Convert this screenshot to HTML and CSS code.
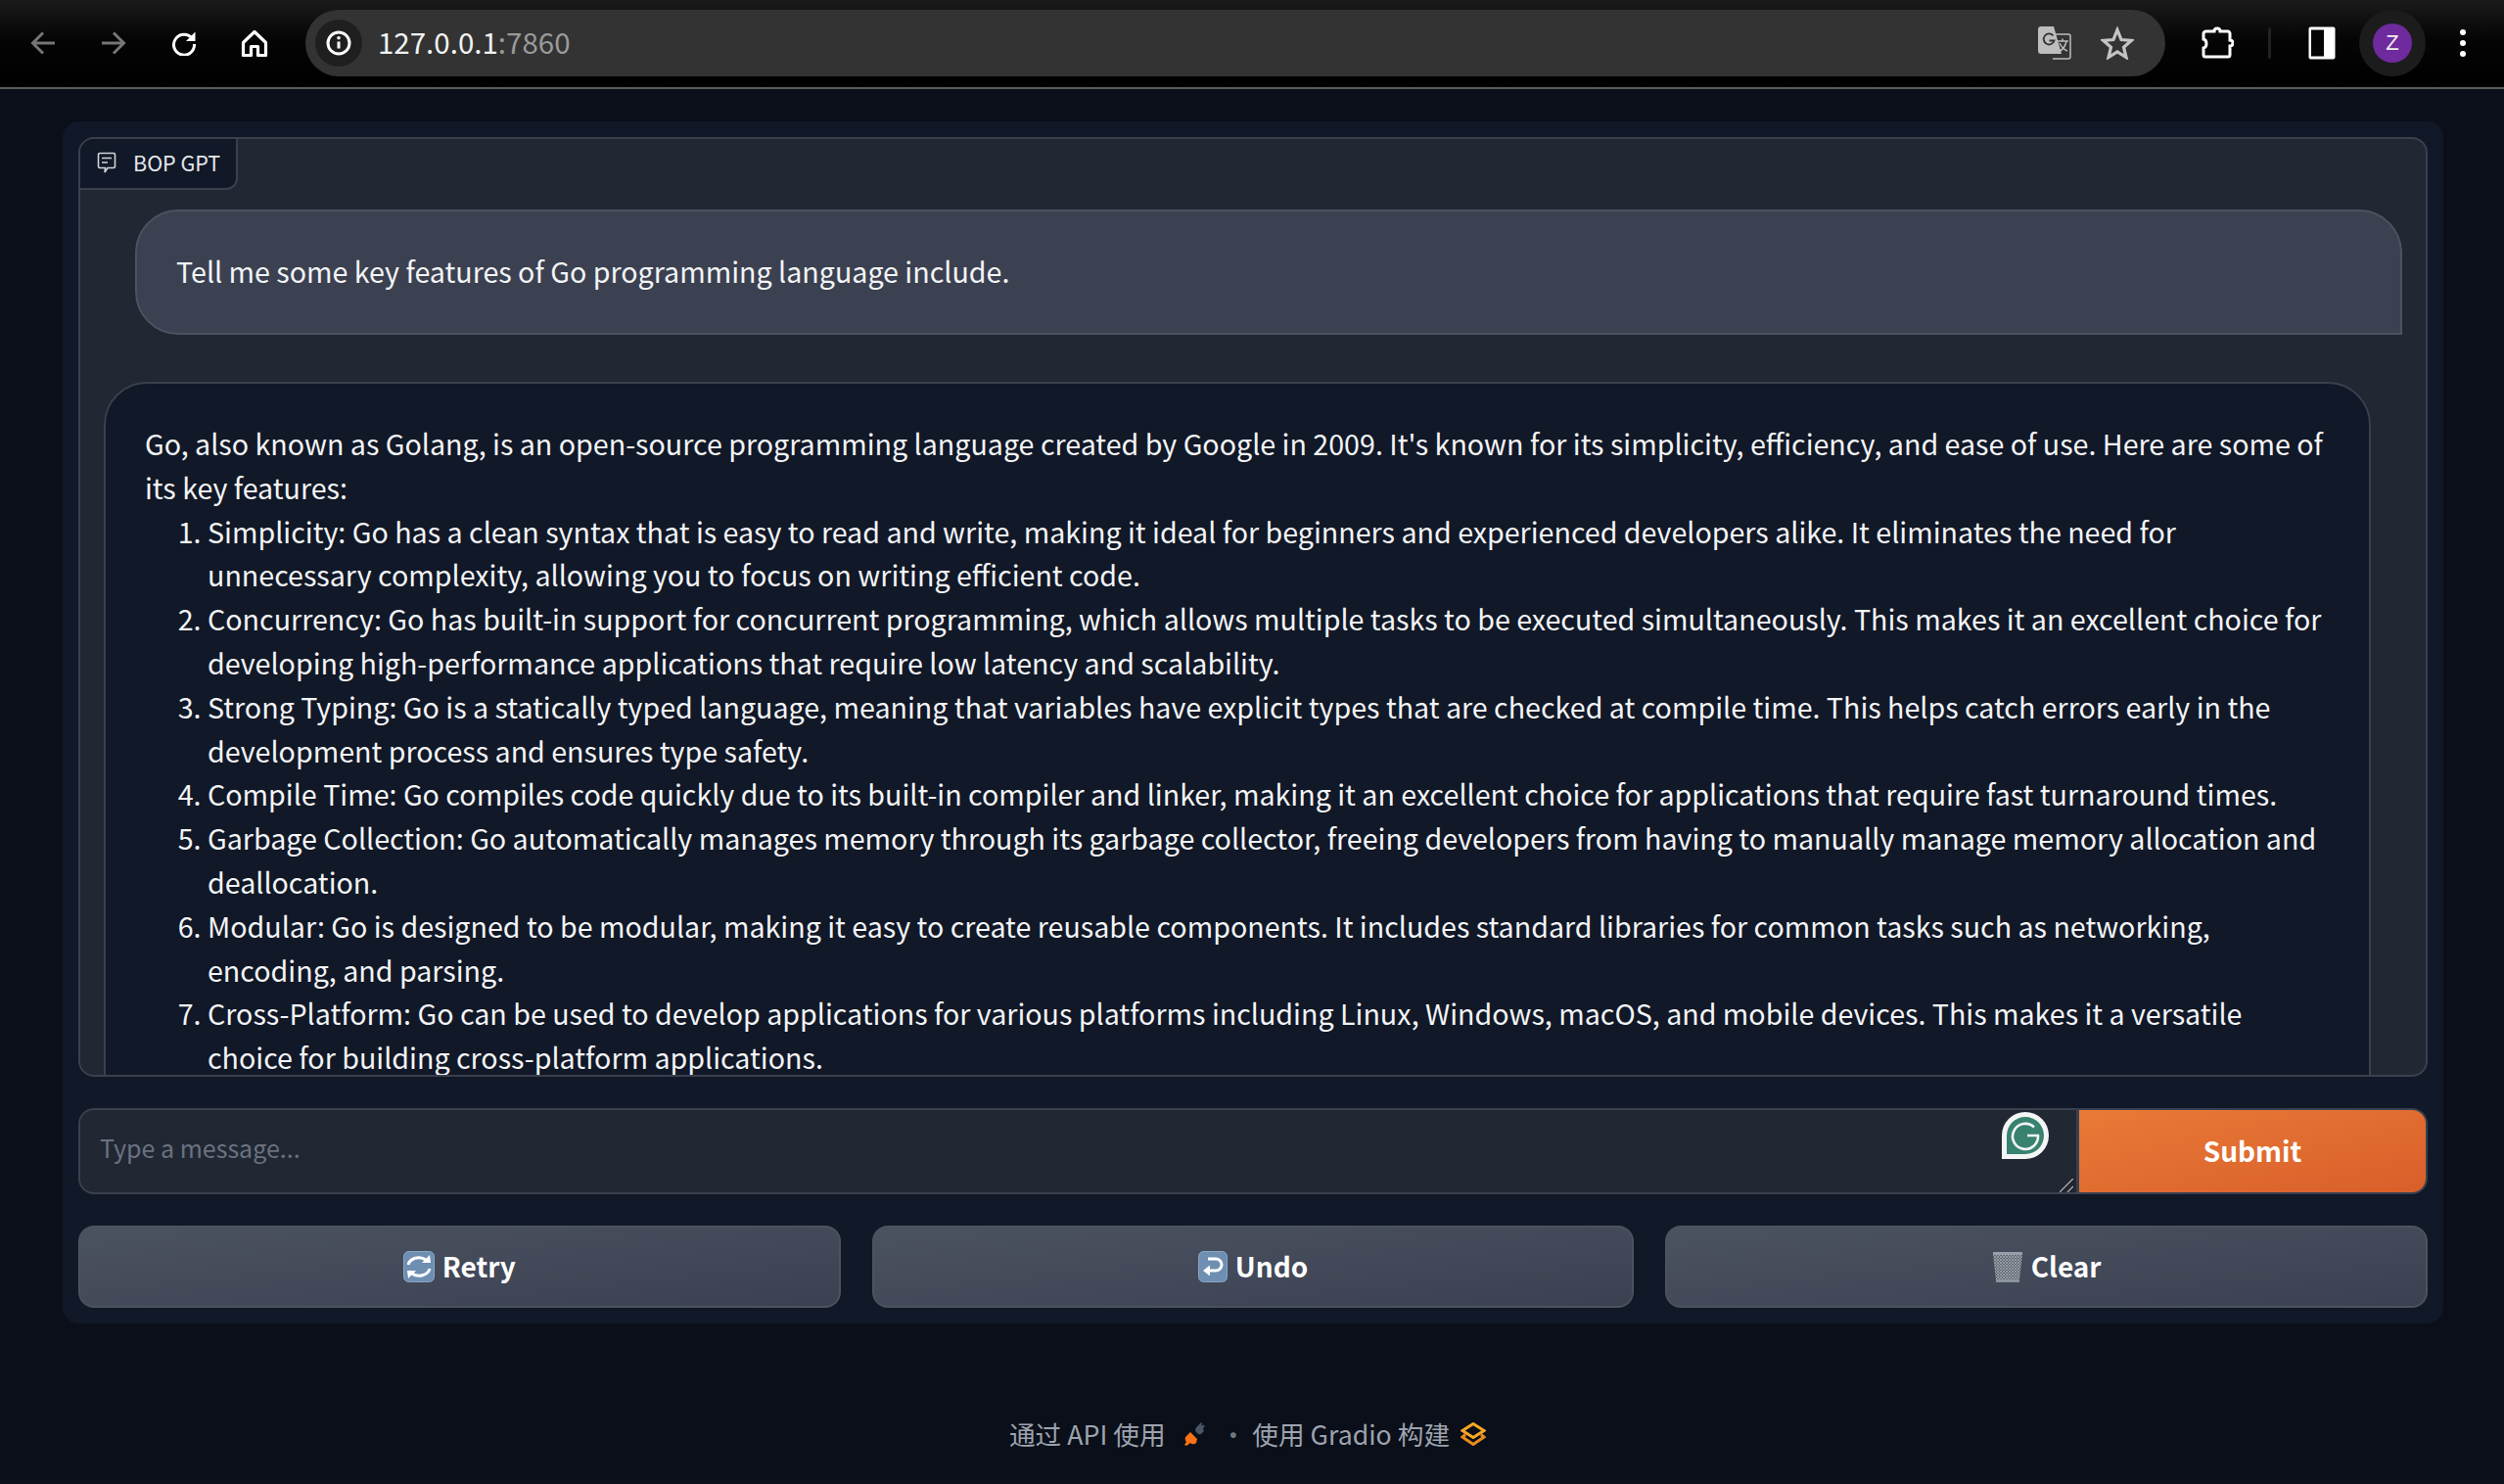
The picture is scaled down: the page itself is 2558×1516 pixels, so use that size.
FILE: index.html
```html
<!DOCTYPE html>
<html lang="en">
<head>
<meta charset="utf-8">
<title>BOP GPT</title>
<link rel="stylesheet" href="styles.css">
</head>
<body>
<header class="toolbar">
  <div class="tool dim"><svg viewBox="0 0 26 26" width="26" height="26"><path d="M25 13H3M13 2.500 2.500 13 13 23.500" class="st2"/></svg></div>
  <div class="tool dim"><svg viewBox="0 0 26 26" width="26" height="26"><path d="M1 13h22M13 2.500 23.500 13 13 23.500" class="st2"/></svg></div>
  <div class="tool"><svg viewBox="0 0 26 26" width="26" height="26"><path d="M21.500 8.500A10.500 10.500 0 1 0 23.500 14" class="st3"/><path d="M24.500 1.500v9.500h-9.500z" class="fillw"/></svg></div>
  <div class="tool"><svg viewBox="0 0 28 28" width="28" height="28"><path d="M14 2.500 2.500 13.500v13h8v-9h7v9h8v-13z" class="st3b"/></svg></div>
  <div class="address">
    <span class="info"><svg viewBox="0 0 26 26" width="26" height="26"><circle cx="13" cy="13" r="11" class="st3"/><path d="M13 11.500v7" class="st3"/><circle cx="13" cy="7.800" r="1.800" class="fillw"/></svg></span>
    <span class="url">127.0.0.1<span class="port">:7860</span></span>
    <span class="addr-space"></span>
    <svg class="translate" viewBox="0 0 34 34" width="34" height="34"><path d="M15 33h16a2 2 0 0 0 2-2V10a2 2 0 0 0-2-2H14" fill="none" stroke="#bdbdbd" stroke-width="1.500"/><path d="M3 0h13l8 28H3a3 3 0 0 1-3-3V3a3 3 0 0 1 3-3z" fill="#bdbdbd"/><path d="M15.500 9.500a5.500 5.500 0 1 0 1 5h-5" fill="none" stroke="#333" stroke-width="1.800"/><path d="M20 15h11M25 12.500v2.500M29 15c-1 5-4 9-8 11M22 17c2 4 5 7 8 8" fill="none" stroke="#bdbdbd" stroke-width="1.500"/></svg>
    <svg class="star" viewBox="0 0 34 34" width="34" height="34"><path d="m17 3.500 4 10 10.500.8-8 6.900 2.500 10.300-9-5.600-9 5.600 2.500-10.300-8-6.900 10.500-.8z" fill="none" stroke="#c4c4c4" stroke-width="3.200"/></svg>
  </div>
  <div class="tool first-right"><svg viewBox="0 0 34 34" width="34" height="34"><path d="M6 5h8c0-4 6-4 6 0h8a3 3 0 0 1 2 2v7c4 0 4 6 0 6v9a2 2 0 0 1-2 2H5a2 2 0 0 1-2-2v-7c4-1 4-8 0-9V7a3 3 0 0 1 3-2z" fill="none" stroke="#fff" stroke-width="3"/></svg></div>
  <div class="divider"><span></span></div>
  <div class="tool"><svg viewBox="0 0 30 36" width="30" height="36"><rect x="1.500" y="1.500" width="27" height="33" rx="2" fill="#fff"/><rect x="4" y="4.500" width="13" height="27" fill="#050505"/></svg></div>
  <div class="tool"><span class="avatar-ring"><span class="avatar">Z</span></span></div>
  <div class="tool"><span class="dots"><i></i><i></i><i></i></span></div>
</header>

<main class="app">
  <section class="chatbot">
    <div class="label">
      <svg viewBox="0 0 20 22" width="20" height="22"><path d="M3 1.500h14a1.500 1.500 0 0 1 1.500 1.500v12a1.500 1.500 0 0 1-1.500 1.500h-6L8 21l.5-4.500H3A1.500 1.500 0 0 1 1.500 15V3A1.500 1.500 0 0 1 3 1.500zM5 6.500h10M5 11h6" fill="none" stroke="#d1d5db" stroke-width="1.600"/></svg>
      <span>BOP GPT</span>
    </div>
    <div class="messages">
      <div class="bubble user">Tell me some key features of Go programming language include.</div>
      <div class="bubble bot">
        <p>Go, also known as Golang, is an open-source programming language created by Google in 2009. It's known for its simplicity, efficiency, and ease of use. Here are some of its key features:</p>
        <ol>
          <li>Simplicity: Go has a clean syntax that is easy to read and write, making it ideal for beginners and experienced developers alike. It eliminates the need for unnecessary complexity, allowing you to focus on writing efficient code.</li>
          <li>Concurrency: Go has built-in support for concurrent programming, which allows multiple tasks to be executed simultaneously. This makes it an excellent choice for developing high-performance applications that require low latency and scalability.</li>
          <li>Strong Typing: Go is a statically typed language, meaning that variables have explicit types that are checked at compile time. This helps catch errors early in the development process and ensures type safety.</li>
          <li>Compile Time: Go compiles code quickly due to its built-in compiler and linker, making it an excellent choice for applications that require fast turnaround times.</li>
          <li>Garbage Collection: Go automatically manages memory through its garbage collector, freeing developers from having to manually manage memory allocation and deallocation.</li>
          <li>Modular: Go is designed to be modular, making it easy to create reusable components. It includes standard libraries for common tasks such as networking, encoding, and parsing.</li>
          <li>Cross-Platform: Go can be used to develop applications for various platforms including Linux, Windows, macOS, and mobile devices. This makes it a versatile choice for building cross-platform applications.</li>
        </ol>
      </div>
    </div>
  </section>

  <form class="composer">
    <div class="input-wrap">
      <textarea class="message" placeholder="Type a message..."></textarea>
      <svg class="grammarly" viewBox="0 0 48 48" width="48" height="48"><path d="M24 0a24 24 0 0 1 0 48H0V24A24 24 0 0 1 24 0z" fill="#f4f6f6"/><path d="M24 5a19 19 0 0 1 0 38H5V24A19 19 0 0 1 24 5z" fill="#388270"/><path d="M33 15.500A13 13 0 1 0 37 24H26" fill="none" stroke="#f4f6f6" stroke-width="2.600"/></svg>
      <svg class="grip" viewBox="0 0 14 14" width="14" height="14"><path d="M0 14 14 0M8 14l6-6" fill="none" stroke="#a3a3a3" stroke-width="1.500"/><path d="M2 14 14 2M10 14l4-4" fill="none" stroke="#111" stroke-width="1"/></svg>
    </div>
    <button type="button" class="submit">Submit</button>
  </form>

  <div class="actions">
    <button type="button" class="action">
      <svg viewBox="0 0 32 32" width="32" height="32"><rect x=".5" y=".5" width="31" height="31" rx="5" class="emoji-blue"/><path d="M5 14a11 9 0 0 1 18-5" fill="none" stroke="#fff" stroke-width="3"/><path d="M19 12h9l-1-8z" fill="#fff"/><path d="M27 18a11 9 0 0 1-18 5" fill="none" stroke="#fff" stroke-width="3"/><path d="M13 20H4l1 8z" fill="#fff"/></svg>
      <span>Retry</span>
    </button>
    <button type="button" class="action">
      <svg viewBox="0 0 30 32" width="30" height="32"><rect x=".5" y=".5" width="29" height="31" rx="5" class="emoji-blue"/><path d="M10 8h8a6 6 0 0 1 0 12h-8" fill="none" stroke="#fff" stroke-width="3"/><path d="M12 14.500 5 20l7 5.500z" fill="#fff"/></svg>
      <span>Undo</span>
    </button>
    <button type="button" class="action">
      <svg viewBox="0 0 32 32" width="32" height="32">
        <defs><pattern id="mesh" width="3" height="3" patternUnits="userSpaceOnUse"><rect width="3" height="3" fill="#5f6772"/><path d="M0 0l3 3M3 0L0 3" stroke="#aab0b7" stroke-width=".7"/></pattern></defs>
        <path d="M1 3h30l-3 27a2 2 0 0 1-2 2H6a2 2 0 0 1-2-2z" fill="url(#mesh)"/><path d="M1 2.500h30" stroke="#97a0aa" stroke-width="3"/><path d="M4 30.500h24" stroke="#8d97a2" stroke-width="2.500"/>
      </svg>
      <span>Clear</span>
    </button>
  </div>
</main>

<footer class="foot">
  <span>通过 API 使用</span>
  <svg class="plug" viewBox="0 0 24 24" width="24" height="24"><path d="M12 6l6-6 1 1-1 3 3-1 1 1-2 3 1 3-3 3a4 4 0 0 1-5-1l-1-1a5 5 0 0 1 0-5z" fill="#4b5563" transform="translate(2 0) scale(.9)"/><path d="M3 15l5-5 7 7-1 4a4 4 0 0 1-6 0l-4 3-2-1 2-3a5 5 0 0 1-1-5z" fill="#f97316" transform="translate(-1 0)"/></svg>
  <span class="sep">·</span>
  <span>使用 Gradio 构建</span>
  <svg class="gradio" viewBox="0 0 26 24" width="26" height="24"><path d="M13 1.500 24 8.500 13 15.500 2 8.500z" fill="none" stroke="#f9a825" stroke-width="3"/><path d="M5 12.500 2 15 13 22.500 24 15l-3-2.500" fill="none" stroke="#ea8a1e" stroke-width="3"/></svg>
</footer>
</body>
</html>
```
FILE: styles.css
```css
* { box-sizing: border-box; }
html, body { margin: 0; height: 100%; }
body {
  background: #0b0f19;
  color: #f3f4f6;
  font-family: "Noto Sans CJK SC", "Noto Sans", sans-serif;
  font-size: 28.640px;
  line-height: 44.8px;
  overflow: hidden;
}
.toolbar {
  height: 91px;
  display: flex;
  align-items: center;
  padding: 0 6px 2px 8px;
  background: linear-gradient(#1b1b1b 0, #050505 45%, #000 100%);
  border-bottom: 2px solid #5c5c5c;
}
.tool { width: 72px; height: 68px; flex: none; display: flex; align-items: center; justify-content: center; }
.tool.dim { opacity: .45; }
.st2 { fill: none; stroke: #fff; stroke-width: 3; }
.st3 { fill: none; stroke: #fff; stroke-width: 3; }
.st3b { fill: none; stroke: #fff; stroke-width: 3.200; stroke-linejoin: round; }
.fillw { fill: #fff; }
.address {
  flex: 1;
  height: 68px;
  margin: 0 17px 0 16px;
  padding: 0 32px 0 10px;
  border-radius: 34px;
  background: #333333;
  display: flex;
  align-items: center;
}
.info { width: 48px; height: 48px; border-radius: 50%; background: #1f1f1f; display: flex; align-items: center; justify-content: center; }
.url { margin: -3px 0 0 16px; font-size: 29.500px; line-height: 40px; color: #f2f2f2; font-family: "Noto Sans CJK SC", sans-serif; }
.port { color: #9a9a9a; }
.addr-space { flex: 1; }
.translate { margin-right: 30px; }
.divider { width: 35px; height: 32px; display: flex; justify-content: center; }
.divider span { width: 3px; background: #222; border-radius: 2px; }
.avatar-ring { width: 68px; height: 68px; border-radius: 50%; background: #1c1c1c; display: flex; align-items: center; justify-content: center; }
.avatar { width: 40px; height: 40px; border-radius: 50%; background: #6f2a9e; color: #eee; font-size: 22px; line-height: 40px; text-align: center; font-family: "Liberation Sans", sans-serif; }
.dots { display: flex; flex-direction: column; gap: 5px; }
.dots i { display: block; width: 6px; height: 6px; border-radius: 50%; background: #fff; }

.app {
  width: 2432px;
  height: 1228px;
  margin: 33px 0 0 64px;
  padding: 16px;
  border-radius: 16px;
  background: #111827;
  display: flex;
  flex-direction: column;
  gap: 32px;
}
.chatbot {
  position: relative;
  height: 960px;
  flex: none;
  background: #212733;
  border: 2px solid #3a404e;
  border-radius: 16px;
  overflow: hidden;
}
.label {
  position: absolute;
  top: 0;
  left: 0;
  height: 52px;
  padding: 0 16px 2px 17px;
  display: flex;
  align-items: center;
  gap: 17px;
  background: #111827;
  border-right: 2px solid #3a404e;
  border-bottom: 2px solid #3a404e;
  border-radius: 0 0 12px 0;
  font-size: 21.500px;
  line-height: 30px;
  color: #e5e7eb;
}
.messages { display: flex; flex-direction: column; gap: 48px; padding: 72px 24px 0; }
.bubble { padding: 39px 40px 40px; }
.user {
  margin-left: 32px;
  background: #3b4151;
  border: 2px solid #4b5260;
  border-radius: 44px 44px 0 44px;
  height: 128px;
}
.bot {
  margin-right: 32px;
  background: #111827;
  border: 2px solid #3a404e;
  border-radius: 44px 44px 44px 0;
  padding-right: 46px;
}
.bot p { margin: 0; }
.bot ol { margin: 0; padding-left: 64px; }

.composer { display: flex; height: 88px; flex: none; }
.input-wrap { position: relative; flex: 1; }
.message {
  display: block;
  width: 100%;
  height: 100%;
  resize: none;
  padding: 19px 20px;
  background: #212733;
  border: 2px solid #3a404e;
  border-right: 0;
  border-radius: 16px 0 0 16px;
  color: #f3f4f6;
  font: 25px/38px "Noto Sans CJK SC", sans-serif;
  outline: none;
}
.message::placeholder { color: #6b7280; }
.grammarly { position: absolute; top: 4px; right: 28px; }
.grip { position: absolute; right: 3px; bottom: 2px; }
.submit {
  width: 359px;
  flex: none;
  padding-bottom: 4px;
  border: 2px solid #374151;
  border-left-width: 3px;
  border-radius: 0 16px 16px 0;
  background: linear-gradient(to bottom right, #e97a37, #d95f2a);
  color: #fff;
  font: 700 28px/40px "Noto Sans CJK SC", sans-serif;
}
.actions { display: grid; grid-template-columns: repeat(3, 1fr); gap: 32px; height: 84px; flex: none; }
.action {
  display: flex;
  align-items: center;
  justify-content: center;
  gap: 8px;
  padding: 0 0 3px;
  border: 2px solid #4b5260;
  border-radius: 16px;
  background: linear-gradient(to bottom right, #4b5260, #3b4151);
  color: #fff;
  font: 700 28px/40px "Noto Sans CJK SC", sans-serif;
}
.action svg { position: relative; top: 1px; }
.emoji-blue { fill: #6e8fb2; stroke: #8ba7c4; }

.foot {
  margin-top: 93px;
  padding-right: 9px;
  display: flex;
  justify-content: center;
  align-items: center;
  font-size: 26.700px;
  line-height: 40px;
  color: #9ca3af;
}
.plug { margin-left: 18px; }
.sep { margin: 0 6px 0 14px; opacity: .7; }
.gradio { margin-left: 11px; }
```
